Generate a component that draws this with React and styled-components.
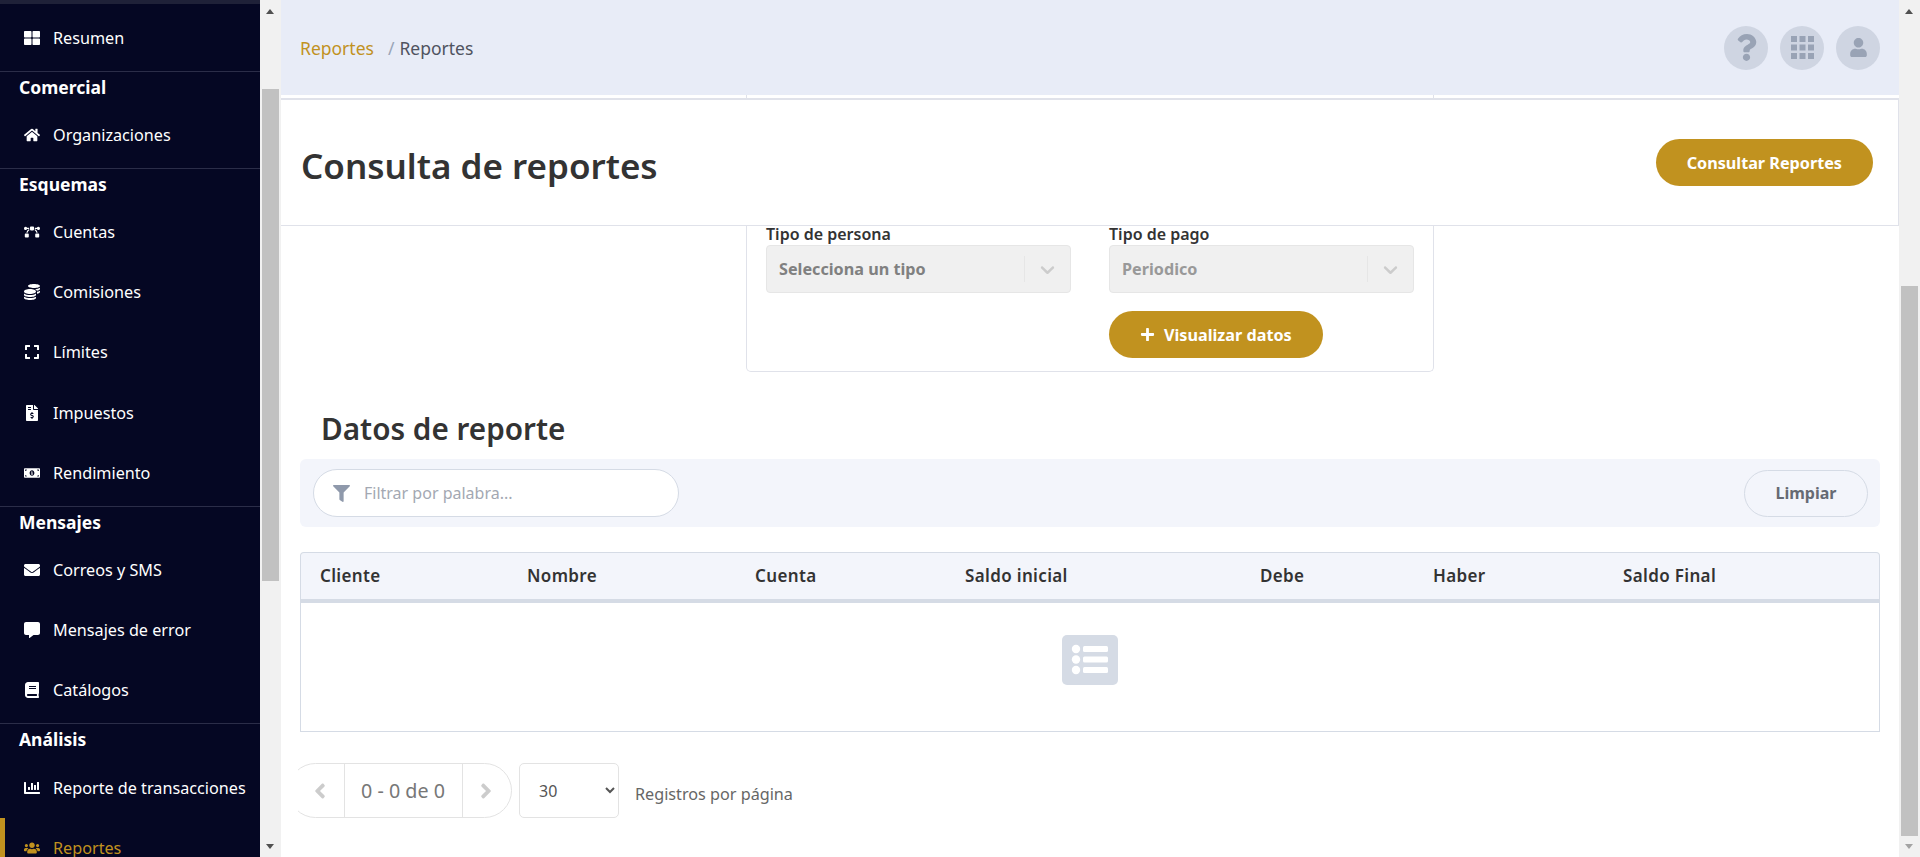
import React from 'react';
import styled, { createGlobalStyle } from 'styled-components';
import {
  FaThLarge, FaHome, FaBezierCurve, FaCoins, FaExpand, FaFileInvoiceDollar, FaMoneyBillAlt,
  FaEnvelope, FaCommentAlt, FaBook, FaChartBar, FaUsers, FaQuestion, FaUser, FaFilter,
  FaPlus, FaAngleLeft, FaAngleRight,
} from 'react-icons/fa';

const GOLD = '#c1921f';
const NAVY = '#050723';
const LINE = '#e0e2ea';

const GlobalStyle = createGlobalStyle`
  html, body {
    margin: 0;
    height: 100%;
    overflow: hidden;
    font-family: "Noto Sans", "Open Sans", sans-serif;
    color: #333;
  }
  * { box-sizing: border-box; }
`;

const Shell = styled.div`
  display: flex;
  height: 100vh;
  overflow: hidden;
  background: #fff;
`;

const Sidebar = styled.nav`
  width: 260px;
  flex: none;
  background: ${NAVY};
  overflow: hidden;
`;

const TopBand = styled.div`
  height: 4px;
  background: #1f2138;
`;

const Section = styled.section`
  padding: ${p => (p.$first ? '4px' : '0')} 0 ${p => (p.$first ? '2.6px' : '3px')};
  border-bottom: 1px solid #2b2d48;
  &:last-child { border-bottom: 0; }
`;

const SectionTitle = styled.h3`
  margin: 0 0 1px;
  height: 32px;
  padding-left: 19px;
  font-size: 17.5px;
  line-height: 30px;
  font-weight: 700;
  color: #fff;
`;

const NavItem = styled.a`
  display: flex;
  align-items: center;
  gap: 13px;
  height: 60.2px;
  padding-left: 24px;
  font-size: 16.2px;
  color: ${p => (p.$active ? GOLD : '#fff')};
  box-shadow: ${p => (p.$active ? `inset 5px 0 0 ${GOLD}` : 'none')};
  svg { width: 16px; height: 16px; flex: none; }
`;

const Track = styled.div`
  width: 21px;
  flex: none;
  background: #f1f1f1;
  display: flex;
  flex-direction: column;
  align-items: center;
  position: relative;
`;

const Arrow = styled.span`
  position: absolute;
  left: 6px;
  ${p => (p.$down ? 'bottom: 8px;' : 'top: 9px;')}
  border-left: 4.5px solid transparent;
  border-right: 4.5px solid transparent;
  ${p => (p.$down
    ? `border-top: 5px solid ${p.$faded ? '#a3a3a3' : '#505050'};`
    : 'border-bottom: 5px solid #505050;')}
`;

const Thumb = styled.div`
  width: 17px;
  margin-top: ${p => p.$top}px;
  height: ${p => p.$height}px;
  background: #c1c1c1;
`;

const Main = styled.main`
  flex: 1;
  min-width: 0;
  display: flex;
  flex-direction: column;
`;

const TopBar = styled.header`
  height: 95px;
  flex: none;
  background: #e8ecf7;
  display: flex;
  align-items: center;
  justify-content: space-between;
  padding: 0 19px;
`;

const Breadcrumb = styled.div`
  display: flex;
  font-size: 17.5px;
  margin-top: 1px;
`;

const Crumb = styled.span`
  color: ${GOLD};
  margin-right: 14px;
`;

const CrumbCurrent = styled.span`
  color: #4f5360;
  &::before { content: '/'; color: #9aa5b8; margin-right: 5px; }
`;

const TopActions = styled.div`
  display: flex;
  gap: 12px;
`;

const RoundIcon = styled.span`
  width: 44px;
  height: 44px;
  border-radius: 50%;
  background: #cfd5e2;
  color: #99a3b5;
  display: flex;
  align-items: center;
  justify-content: center;
  svg { width: ${p => p.$size || 23}px; height: ${p => p.$size || 23}px; }
`;

const CardStub = styled.div`
  height: 3px;
  flex: none;
  width: 688px;
  margin-left: 465px;
  border-left: 1px solid ${LINE};
  border-right: 1px solid ${LINE};
`;

const PageHead = styled.div`
  height: 128px;
  flex: none;
  display: flex;
  align-items: center;
  justify-content: space-between;
  padding: 0 25px 0 20px;
  border: 1px solid ${LINE};
  border-left: 0;
  border-top-width: 2px;
`;

const PageTitle = styled.h1`
  margin: 6px 0 0;
  font-size: 35px;
  font-weight: 600;
  color: #333;
`;

const GoldButton = styled.button`
  height: 47px;
  padding: 0 ${p => p.$pad || 31}px;
  border: 0;
  border-radius: 24px;
  background: ${GOLD};
  color: #fff;
  font: 700 16.2px "Noto Sans", sans-serif;
  display: inline-flex;
  align-items: center;
  gap: 9px;
  svg { width: 15px; height: 15px; }
`;

const FormCard = styled.div`
  flex: none;
  width: 688px;
  height: 146px;
  margin-left: 465px;
  padding: 0 19px;
  display: grid;
  grid-template-columns: 305px 305px;
  column-gap: 38px;
  align-content: start;
  border: 1px solid ${LINE};
  border-top: 0;
  border-radius: 0 0 5px 5px;
`;

const Field = styled.div``;

const FieldLabel = styled.label`
  display: block;
  height: 19px;
  font-size: 16px;
  line-height: 16px;
  font-weight: 600;
  color: #333;
`;

const FakeSelect = styled.div`
  height: 48px;
  display: flex;
  align-items: center;
  background: #f0f0f0;
  border: 1px solid #e6e6e6;
  border-radius: 4px;
  padding-left: 12px;
  font-size: 16.2px;
  font-weight: 700;
  color: ${p => (p.$muted ? '#999' : '#808080')};
`;

const SelectValue = styled.span`
  flex: 1;
`;

const SelectCaret = styled.span`
  width: 46px;
  height: 26px;
  display: flex;
  align-items: center;
  justify-content: center;
  border-left: 1px solid #e6e6e6;
  color: #ccc;
  svg { width: 23px; height: 23px; }
`;

const FormAction = styled.div`
  grid-column: 2;
  padding-top: 18px;
`;

const Content = styled.div`
  padding: 0 19px;
`;

const SectionHeading = styled.h2`
  margin: 37px 0 10px 21px;
  font-size: 29.7px;
  line-height: 40px;
  font-weight: 600;
  color: #333;
`;

const FilterBar = styled.div`
  height: 68px;
  display: flex;
  align-items: center;
  justify-content: space-between;
  padding: 0 12px 0 13px;
  background: #f3f5fb;
  border-radius: 6px;
`;

const SearchBox = styled.label`
  width: 366px;
  height: 48px;
  display: flex;
  align-items: center;
  gap: 12px;
  padding-left: 19px;
  background: #fff;
  border: 1px solid #d5dbe5;
  border-radius: 24px;
  color: #8f99ab;
  svg { width: 17px; height: 17px; flex: none; }
`;

const SearchInput = styled.input`
  flex: 1;
  min-width: 0;
  border: 0;
  outline: 0;
  background: transparent;
  font: 16px "Noto Sans", sans-serif;
  &::placeholder { color: #a3a8b2; }
`;

const GhostButton = styled.button`
  width: 124px;
  height: 47px;
  background: transparent;
  border: 1px solid #d5dbe5;
  border-radius: 24px;
  color: #666a73;
  font: 700 16px "Noto Sans", sans-serif;
`;

const Table = styled.div`
  margin-top: 25px;
`;

const HeadRow = styled.div`
  display: grid;
  grid-template-columns: 207px 228px 210px 295px 173px 190px 1fr;
  align-items: center;
  height: 51px;
  padding: 0 0 1px 19px;
  background: #f3f5fb;
  border: 1px solid #d5dbe5;
  border-bottom: 4px solid #d5dbe5;
  border-radius: 4px 4px 0 0;
  font-size: 17px;
  letter-spacing: 0.35px;
  font-weight: 600;
  color: #333;
`;

const EmptyBody = styled.div`
  height: 129px;
  display: flex;
  justify-content: center;
  padding-top: 32px;
  border: 1px solid #d5dbe5;
  border-top: 0;
`;

const Pagination = styled.div`
  display: flex;
  align-items: flex-start;
  margin: 31px 0 0 -2px;
`;

const PagerClip = styled.div`
  overflow: hidden;
  flex: none;
`;

const Pager = styled.div`
  display: flex;
  height: 55px;
  width: 224px;
  margin-left: -10px;
  border: 1px solid #e3e3e3;
  border-radius: 28px;
  color: #ccc;
`;

const PagerButton = styled.span`
  flex: 1;
  display: flex;
  align-items: center;
  justify-content: center;
  padding: ${p => (p.$prev ? '0 0 0 8px' : '0 2px 0 0')};
  svg { width: 24px; height: 24px; }
`;

const PagerText = styled.span`
  width: 119px;
  flex: none;
  display: flex;
  align-items: center;
  justify-content: center;
  padding-bottom: 1px;
  border-left: 1px solid #e3e3e3;
  border-right: 1px solid #e3e3e3;
  font-size: 19.7px;
  color: #777;
`;

const PageSize = styled.select`
  width: 100px;
  height: 55px;
  margin-left: 7px;
  padding-left: 15px;
  background: #fff;
  border: 1px solid #e3e3e3;
  border-radius: 5px;
  font: 16px "Noto Sans", sans-serif;
  color: #555;
`;

const PageSizeLabel = styled.span`
  margin: 21px 0 0 16px;
  font-size: 16.2px;
  line-height: 20px;
  color: #666;
`;

const GridIcon = () => (
  <svg viewBox="0 0 23 23" fill="currentColor">
    {[0, 8.5, 17].map(y => [0, 8.5, 17].map(x => (
      <rect key={`${x}-${y}`} x={x} y={y} width="6" height="6" />
    )))}
  </svg>
);

const ChevronIcon = () => (
  <svg viewBox="0 0 20 20" fill="currentColor">
    <path d="M4.516 7.548c0.436-0.446 1.043-0.481 1.576 0l3.908 3.747 3.908-3.747c0.533-0.481 1.141-0.446 1.574 0 0.436 0.445 0.408 1.197 0 1.615-0.406 0.418-4.695 4.502-4.695 4.502-0.217 0.223-0.502 0.335-0.787 0.335s-0.57-0.112-0.789-0.335c0 0-4.287-4.084-4.695-4.502s-0.436-1.17 0-1.615z" />
  </svg>
);

const EmptyListIcon = () => (
  <svg width="56" height="50" viewBox="0 0 56 50">
    <rect width="56" height="50" rx="5" fill="#d5dbe5" />
    {[14, 24.5, 35].map(y => (
      <g key={y} fill="#fff">
        <circle cx="14" cy={y} r="4.2" />
        <rect x="21" y={y - 3} width="25" height="6" rx="1.5" />
      </g>
    ))}
  </svg>
);

const NAV = [
  { items: [{ label: 'Resumen', icon: FaThLarge }], first: true },
  { title: 'Comercial', items: [{ label: 'Organizaciones', icon: FaHome }] },
  {
    title: 'Esquemas',
    items: [
      { label: 'Cuentas', icon: FaBezierCurve },
      { label: 'Comisiones', icon: FaCoins },
      { label: 'Límites', icon: FaExpand },
      { label: 'Impuestos', icon: FaFileInvoiceDollar },
      { label: 'Rendimiento', icon: FaMoneyBillAlt },
    ],
  },
  {
    title: 'Mensajes',
    items: [
      { label: 'Correos y SMS', icon: FaEnvelope },
      { label: 'Mensajes de error', icon: FaCommentAlt },
      { label: 'Catálogos', icon: FaBook },
    ],
  },
  {
    title: 'Análisis',
    items: [
      { label: 'Reporte de transacciones', icon: FaChartBar },
      { label: 'Reportes', icon: FaUsers, active: true },
    ],
  },
];

const COLUMNS = ['Cliente', 'Nombre', 'Cuenta', 'Saldo inicial', 'Debe', 'Haber', 'Saldo Final'];

export default function App() {
  return (
    <Shell>
      <GlobalStyle />
      <Sidebar>
        <TopBand />
        {NAV.map((section, i) => (
          <Section key={i} $first={section.first}>
            {section.title && <SectionTitle>{section.title}</SectionTitle>}
            {section.items.map(({ label, icon: Icon, active }) => (
              <NavItem key={label} $active={active}>
                <Icon />
                {label}
              </NavItem>
            ))}
          </Section>
        ))}
      </Sidebar>
      <Track>
        <Arrow />
        <Thumb $top={89} $height={492} />
        <Arrow $down />
      </Track>
      <Main>
        <TopBar>
          <Breadcrumb>
            <Crumb>Reportes</Crumb>
            <CrumbCurrent>Reportes</CrumbCurrent>
          </Breadcrumb>
          <TopActions>
            <RoundIcon $size={27}><FaQuestion /></RoundIcon>
            <RoundIcon><GridIcon /></RoundIcon>
            <RoundIcon $size={19}><FaUser /></RoundIcon>
          </TopActions>
        </TopBar>
        <CardStub />
        <PageHead>
          <PageTitle>Consulta de reportes</PageTitle>
          <GoldButton>Consultar Reportes</GoldButton>
        </PageHead>
        <FormCard>
          <Field>
            <FieldLabel>Tipo de persona</FieldLabel>
            <FakeSelect>
              <SelectValue>Selecciona un tipo</SelectValue>
              <SelectCaret><ChevronIcon /></SelectCaret>
            </FakeSelect>
          </Field>
          <Field>
            <FieldLabel>Tipo de pago</FieldLabel>
            <FakeSelect $muted>
              <SelectValue>Periodico</SelectValue>
              <SelectCaret><ChevronIcon /></SelectCaret>
            </FakeSelect>
          </Field>
          <FormAction>
            <GoldButton $pad={31}><FaPlus />Visualizar datos</GoldButton>
          </FormAction>
        </FormCard>
        <Content>
          <SectionHeading>Datos de reporte</SectionHeading>
          <FilterBar>
            <SearchBox>
              <FaFilter />
              <SearchInput placeholder="Filtrar por palabra..." />
            </SearchBox>
            <GhostButton>Limpiar</GhostButton>
          </FilterBar>
          <Table>
            <HeadRow>
              {COLUMNS.map(c => <span key={c}>{c}</span>)}
            </HeadRow>
            <EmptyBody><EmptyListIcon /></EmptyBody>
          </Table>
          <Pagination>
            <PagerClip>
              <Pager>
                <PagerButton $prev><FaAngleLeft /></PagerButton>
                <PagerText>0 - 0 de 0</PagerText>
                <PagerButton><FaAngleRight /></PagerButton>
              </Pager>
            </PagerClip>
            <PageSize defaultValue="30">
              <option value="30">30</option>
              <option value="60">60</option>
            </PageSize>
            <PageSizeLabel>Registros por página</PageSizeLabel>
          </Pagination>
        </Content>
      </Main>
      <Track>
        <Arrow />
        <Thumb $top={286} $height={550} />
        <Arrow $down $faded />
      </Track>
    </Shell>
  );
}
